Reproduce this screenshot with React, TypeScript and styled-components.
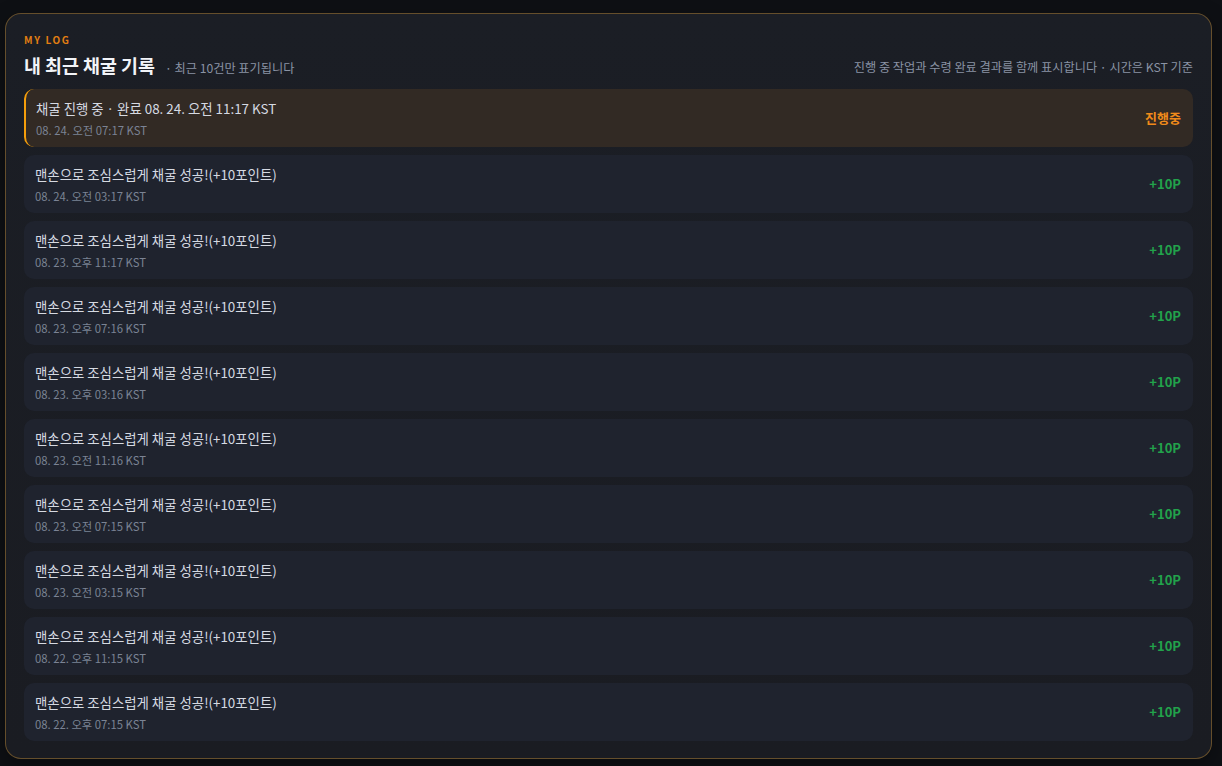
import React from 'react'
import styled, { createGlobalStyle } from 'styled-components'

const GlobalStyle = createGlobalStyle`
  html, body {
    margin: 0;
    padding: 0;
    background: #0e1014;
  }
  body {
    font-family: "Noto Sans CJK KR", "Noto Sans", sans-serif;
  }
`

const Page = styled.div`
  padding: 13px 10px 7px 5px;
  min-height: 766px;
  box-sizing: border-box;
`

const Card = styled.section`
  border: 1px solid rgba(176, 128, 52, 0.5);
  border-radius: 16px;
  background: linear-gradient(180deg, #1b1e25 0%, #1a1c22 100%);
  padding: 19px 18px 17px 18px;
  box-shadow: 0 6px 20px rgba(0, 0, 0, 0.35);
`

const Eyebrow = styled.div`
  font-size: 10px;
  line-height: 14px;
  font-weight: 700;
  letter-spacing: 1.6px;
  color: #e27e12;
`

const HeaderRow = styled.div`
  display: flex;
  align-items: flex-end;
  justify-content: space-between;
  margin-top: 3px;
  height: 28px;
`

const TitleGroup = styled.div`
  display: flex;
  align-items: baseline;
  gap: 10px;
`

const Title = styled.h2`
  margin: 0;
  font-size: 18.4px;
  line-height: 26px;
  font-weight: 700;
  color: #f2f4f8;
`

const Hint = styled.span`
  font-size: 12.2px;
  color: #8a93a4;
`

const Note = styled.span`
  font-size: 12.2px;
  line-height: 20px;
  color: #8a93a4;
  padding-bottom: 1px;
`

const List = styled.ul`
  list-style: none;
  margin: 11px 0 0;
  padding: 0;
  display: flex;
  flex-direction: column;
  gap: 8px;
`

const Row = styled.li<{ $active?: boolean }>`
  display: flex;
  align-items: center;
  justify-content: space-between;
  height: 58px;
  box-sizing: border-box;
  padding: 0 12px 0 ${({ $active }) => ($active ? '10px' : '11px')};
  border-radius: 10px;
  background: ${({ $active }) => ($active ? '#322a24' : '#1f232e')};
  border-left: ${({ $active }) => ($active ? '2px solid #f59e0b' : 'none')};
`

const Info = styled.div`
  display: flex;
  flex-direction: column;
  gap: 5px;
  padding-top: 1px;
`

const RowTitle = styled.div`
  font-size: 13.4px;
  line-height: 18px;
  color: #d6dae2;
`

const RowTime = styled.div`
  font-size: 11.3px;
  line-height: 16px;
  color: #7b8394;
`

const Badge = styled.span<{ $tone: 'green' | 'orange' }>`
  font-size: 13px;
  line-height: 18px;
  font-weight: 700;
  color: ${({ $tone }) => ($tone === 'green' ? '#22a24b' : '#f08a1a')};
`

type LogItem = {
  title: string
  time: string
  result: string
  active?: boolean
}

const logs: LogItem[] = [
  { title: '채굴 진행 중 · 완료 08. 24. 오전 11:17 KST', time: '08. 24. 오전 07:17 KST', result: '진행중', active: true },
  { title: '맨손으로 조심스럽게 채굴 성공!(+10포인트)', time: '08. 24. 오전 03:17 KST', result: '+10P' },
  { title: '맨손으로 조심스럽게 채굴 성공!(+10포인트)', time: '08. 23. 오후 11:17 KST', result: '+10P' },
  { title: '맨손으로 조심스럽게 채굴 성공!(+10포인트)', time: '08. 23. 오후 07:16 KST', result: '+10P' },
  { title: '맨손으로 조심스럽게 채굴 성공!(+10포인트)', time: '08. 23. 오후 03:16 KST', result: '+10P' },
  { title: '맨손으로 조심스럽게 채굴 성공!(+10포인트)', time: '08. 23. 오전 11:16 KST', result: '+10P' },
  { title: '맨손으로 조심스럽게 채굴 성공!(+10포인트)', time: '08. 23. 오전 07:15 KST', result: '+10P' },
  { title: '맨손으로 조심스럽게 채굴 성공!(+10포인트)', time: '08. 23. 오전 03:15 KST', result: '+10P' },
  { title: '맨손으로 조심스럽게 채굴 성공!(+10포인트)', time: '08. 22. 오후 11:15 KST', result: '+10P' },
  { title: '맨손으로 조심스럽게 채굴 성공!(+10포인트)', time: '08. 22. 오후 07:15 KST', result: '+10P' },
]

const App: React.FC = () => {
  return (
    <>
      <GlobalStyle />
      <Page>
        <Card>
          <Eyebrow>MY LOG</Eyebrow>
          <HeaderRow>
            <TitleGroup>
              <Title>내 최근 채굴 기록</Title>
              <Hint>· 최근 10건만 표기됩니다</Hint>
            </TitleGroup>
            <Note>진행 중 작업과 수령 완료 결과를 함께 표시합니다 · 시간은 KST 기준</Note>
          </HeaderRow>
          <List>
            {logs.map((item, index) => (
              <Row key={index} $active={item.active}>
                <Info>
                  <RowTitle>{item.title}</RowTitle>
                  <RowTime>{item.time}</RowTime>
                </Info>
                <Badge $tone={item.active ? 'orange' : 'green'}>{item.result}</Badge>
              </Row>
            ))}
          </List>
        </Card>
      </Page>
    </>
  )
}

export default App
